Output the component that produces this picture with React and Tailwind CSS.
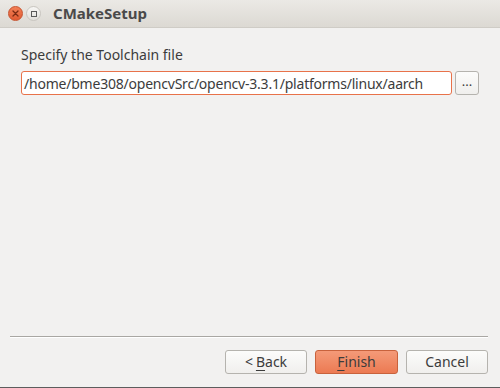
import React from "react";

function Btn({ children, primary, className = "" }) {
  return (
    <button
      className={
        "h-[24px] rounded-[3px] border text-[13px] leading-none flex items-center justify-center " +
        (primary
          ? "border-[#c8623c] bg-gradient-to-b from-[#f49a78] to-[#ec7a52] text-[#3c3c3c] "
          : "border-[#b5b3ae] bg-gradient-to-b from-[#fcfcfb] to-[#f0efed] text-[#3c3c3c] ") +
        className
      }
    >
      {children}
    </button>
  );
}

export default function App() {
  return (
    <div
      className="w-[500px] h-[388px] bg-[#f2f1f0] flex flex-col overflow-hidden"
      style={{ fontFamily: '"Noto Sans", "Open Sans", sans-serif' }}
    >
      {/* title bar */}
      <div className="h-[28px] flex items-center bg-gradient-to-b from-[#ebe9e5] to-[#dcd9d3] border-b border-[#cfccc6]">
        <div className="ml-[8px] w-[15px] h-[15px] rounded-full bg-gradient-to-b from-[#f37f55] to-[#df5a32] border border-[#c6512d] flex items-center justify-center">
          <svg width="7" height="7" viewBox="0 0 7 7">
            <path d="M1 1L6 6M6 1L1 6" stroke="#7a2a12" strokeWidth="1.3" strokeLinecap="round" />
          </svg>
        </div>
        <div className="ml-[3px] w-[15px] h-[15px] rounded-full bg-gradient-to-b from-[#f7f6f4] to-[#e2e0dc] border border-[#c9c6c0] flex items-center justify-center">
          <div className="w-[6px] h-[6px] border border-[#5a5a5a]" />
        </div>
        <span className="ml-[12px] text-[15px] font-bold text-[#4a4a4a]">CMakeSetup</span>
      </div>

      {/* body */}
      <div className="flex-1 flex flex-col px-[21px] pt-[19px]">
        <div className="text-[14px] text-[#3c3c3c] leading-[16px]">Specify the Toolchain file</div>
        <div className="mt-[8px] flex items-center gap-[3px]">
          <div className="w-[431px] h-[24px] rounded-[3px] border border-[#e8724a] bg-white flex items-center pl-[2px] overflow-hidden">
            <span className="text-[14px] text-[#3c3c3c] whitespace-nowrap tracking-[-0.22px]">
              /home/bme308/opencvSrc/opencv-3.3.1/platforms/linux/aarch
            </span>
          </div>
          <Btn className="w-[24px] text-[11px] pb-[3px]">...</Btn>
        </div>
      </div>

      {/* footer */}
      <div className="px-[10px]">
        <div className="mr-[2px] border-t border-[#a9a7a3] border-b border-b-white" />
      </div>
      <div className="flex justify-end gap-[8px] pr-[12px] pt-[12px] pb-[13px]">
        <Btn className="w-[82px] text-[14px]">
          &lt; <span className="underline underline-offset-[3px] ml-[3px]">B</span>ack
        </Btn>
        <Btn primary className="w-[83px] text-[14px]">
          <span className="underline underline-offset-[3px]">F</span>inish
        </Btn>
        <Btn className="w-[82px] text-[14px]">Cancel</Btn>
      </div>
      <div className="h-[1px] bg-[#5d5d5d]" />
    </div>
  );
}
